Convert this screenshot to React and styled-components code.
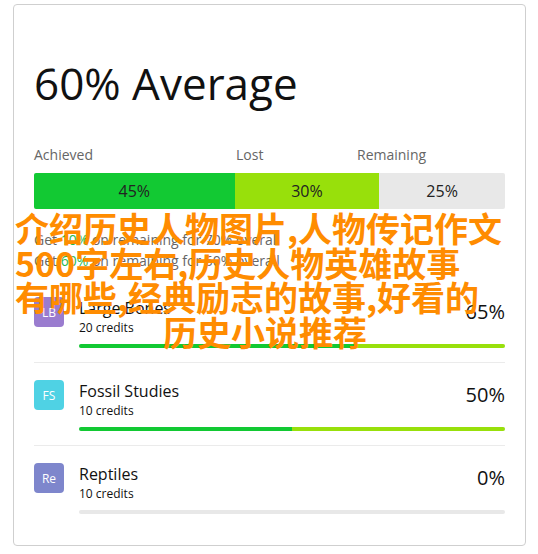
import styled, { createGlobalStyle } from "styled-components";

const GlobalStyle = createGlobalStyle`
  body {
    margin: 0;
    background: #fff;
    font-family: "Open Sans", "Noto Sans", sans-serif;
  }
`;

const Page = styled.div`
  position: relative;
  padding: 4px 12px 8px 13px;
`;

const Card = styled.div`
  border: 1px solid #cfcfcf;
  border-radius: 4px;
  padding: 0 20px 17px;
`;

const Title = styled.h1`
  margin: 0;
  padding-top: 48px;
  font-size: 44px;
  font-weight: 400;
  line-height: 60px;
  color: #111;
`;

const Labels = styled.div`
  display: flex;
  margin-top: 32px;
  font-size: 14px;
  line-height: 20px;
  color: #666;
`;

const Label = styled.div`
  width: ${(p) => p.w}px;
`;

const Bar = styled.div`
  display: flex;
  height: 36px;
  margin-top: 8px;
  border-radius: 2px;
  overflow: hidden;
`;

const Segment = styled.div`
  flex: ${(p) => p.grow};
  background: ${(p) => p.color};
  display: flex;
  align-items: center;
  justify-content: center;
  font-size: 16px;
  color: #222;
`;

const Info = styled.div`
  margin-top: 20px;
  font-size: 14px;
  line-height: 21px;
  color: #666;
`;

const Hi = styled.span`
  color: #27b84a;
`;

const List = styled.div`
  margin-top: 9px;
`;

const Row = styled.div`
  display: flex;
  gap: 15px;
  padding: 17px 0 14px;
  border-bottom: ${(p) => (p.last ? "none" : "1px solid #ebebeb")};
`;

const Avatar = styled.div`
  width: 30px;
  height: 30px;
  flex: none;
  border-radius: 4px;
  background: ${(p) => p.color};
  color: #fff;
  font-size: 12px;
  display: flex;
  align-items: center;
  justify-content: center;
`;

const Body = styled.div`
  flex: 1;
`;

const Head = styled.div`
  display: flex;
  justify-content: space-between;
  align-items: flex-start;
`;

const Name = styled.div`
  font-size: 16px;
  line-height: 22px;
  color: #111;
`;

const Credits = styled.div`
  font-size: 12px;
  line-height: 17px;
  color: #111;
`;

const Pct = styled.div`
  font-size: 20px;
  line-height: 28px;
  margin-top: 1px;
  color: #111;
`;

const Track = styled.div`
  display: flex;
  height: 4px;
  margin-top: 8px;
  border-radius: 2px;
  overflow: hidden;
  background: #e8e8e8;
`;

const Fill = styled.div`
  background: ${(p) => p.color};
`;

const Overlay = styled.div`
  position: absolute;
  left: 15px;
  top: 211px;
  width: 500px;
  font-family: "Noto Sans CJK SC", sans-serif;
  font-weight: 700;
  font-size: 34px;
  line-height: 34.5px;
  color: #ff8c00;
  pointer-events: none;
`;

const Line = styled.div`
  text-align: ${(p) => (p.center ? "center" : "left")};
  white-space: nowrap;
`;

const GREEN = "#12c933";
const LIME = "#98e00b";

const courses = [
  { code: "LB", name: "Large Bones", credits: 20, pct: 65, lost: 35, color: "#9a7ccf" },
  { code: "FS", name: "Fossil Studies", credits: 10, pct: 50, lost: 50, color: "#4fd2e4" },
  { code: "Re", name: "Reptiles", credits: 10, pct: 0, lost: 0, color: "#7e86cc" },
];

export default function App() {
  return (
    <Page>
      <GlobalStyle />
      <Card>
        <Title>60% Average</Title>
        <Labels>
          <Label w={202}>Achieved</Label>
          <Label w={121}>Lost</Label>
          <Label w={120}>Remaining</Label>
        </Labels>
        <Bar>
          <Segment grow={201} color={GREEN}>45%</Segment>
          <Segment grow={145} color={LIME}>30%</Segment>
          <Segment grow={126} color="#e8e8e8">25%</Segment>
        </Bar>
        <Info>
          Get <Hi>10%</Hi> on remaining for 70% overall
          <br />
          Get <Hi>60%</Hi> on remaining for 60% overall
        </Info>
        <List>
          {courses.map((c, i) => (
            <Row key={c.code} last={i === courses.length - 1}>
              <Avatar color={c.color}>{c.code}</Avatar>
              <Body>
                <Head>
                  <div>
                    <Name>{c.name}</Name>
                    <Credits>{c.credits} credits</Credits>
                  </div>
                  <Pct>{c.pct}%</Pct>
                </Head>
                <Track>
                  <Fill color={GREEN} style={{ width: `${c.pct}%` }} />
                  <Fill color={LIME} style={{ width: `${c.lost}%` }} />
                </Track>
              </Body>
            </Row>
          ))}
        </List>
      </Card>
      <Overlay>
        <Line>介绍历史人物图片,人物传记作文</Line>
        <Line>500字左右,历史人物英雄故事</Line>
        <Line>有哪些,经典励志的故事,好看的</Line>
        <Line center>历史小说推荐</Line>
      </Overlay>
    </Page>
  );
}
